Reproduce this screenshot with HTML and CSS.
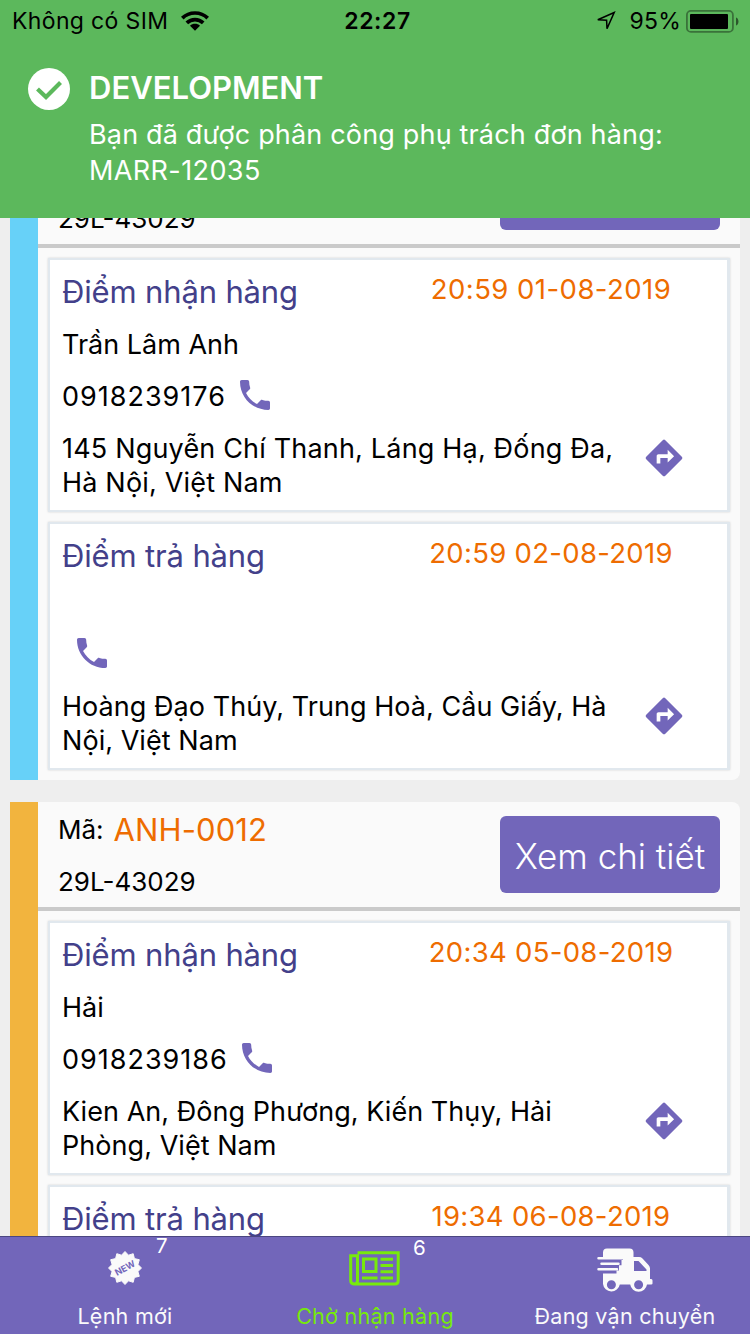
FILE: index.html
```html
<!DOCTYPE html>
<html lang="vi">
<head>
<meta charset="utf-8">
<title>Chờ nhận hàng</title>
<link rel="stylesheet" href="styles.css">
</head>
<body>
<svg class="defs" width="0" height="0">
  <symbol id="phone" viewBox="0 0 24 24"><path d="M6.620 10.790c1.440 2.830 3.760 5.140 6.590 6.590l2.200-2.200c.27-.27.67-.36 1.020-.24 1.120.37 2.330.57 3.570.57.55 0 1 .45 1 1V20c0 .55-.45 1-1 1C10.610 21 3 13.390 3 4c0-.55.45-1 1-1h3.500c.55 0 1 .45 1 1 0 1.250.2 2.450.57 3.570.11.35.03.74-.25 1.020l-2.200 2.200z"/></symbol>
  <symbol id="directions" viewBox="0 0 24 24"><path d="M21.710 11.290l-9-9a.996.996 0 0 0-1.410 0l-9 9a.996.996 0 0 0 0 1.410l9 9c.39.39 1.020.39 1.410 0l9-9a.996.996 0 0 0 0-1.410zM14 14.500V12h-4v3H8v-4c0-.55.45-1 1-1h5V7.500l3.500 3.500-3.500 3.500z"/></symbol>
</svg>
<div class="app">
  <header class="banner">
    <div class="status">
      <div class="status-left">
        <span class="carrier">Không có SIM</span>
        <svg width="28" height="20" viewBox="0 0 28 20"><g fill="none" stroke="#000" stroke-width="3.700"><path d="M1.300 7.100C8.200 .3 19.800 .3 26.700 7.100"/><path d="M5.800 11.900C10.400 7.400 17.600 7.400 22.200 11.900"/></g><path d="M9 14.800C11.800 12.200 16.200 12.200 19 14.800L14 19.800Z"/></svg>
      </div>
      <span class="clock">22:27</span>
      <div class="status-right">
        <svg class="locate" width="20" height="20" viewBox="0 0 20 20"><path d="M18.200 1.500L1.800 8.800L10.600 9.200L11 17.600Z" fill="none" stroke="#000" stroke-width="1.500"/></svg>
        <span class="percent">95%</span>
        <svg width="54" height="24" viewBox="0 0 54 24"><rect x="1.900" y="1.900" width="46" height="21" rx="4" fill="none" stroke="#3a723a" stroke-width="1.800"/><rect x="5" y="5" width="38" height="15" rx="1"/><path d="M51 8.500C54.300 9.500 54.300 15.500 51 16.500Z" fill="#2c562c"/></svg>
      </div>
    </div>
    <div class="notice">
      <svg class="check" width="42" height="42" viewBox="0 0 42 42"><circle cx="21" cy="21" r="21" fill="#fff"/><path d="M9.500 21L18 29L32.500 14.500" fill="none" stroke="#5cb85c" stroke-width="4.200"/></svg>
      <div class="notice-body">
        <div class="notice-title">DEVELOPMENT</div>
        <div class="notice-text">Bạn đã được phân công phụ trách đơn hàng:<br><span class="code">MARR-12035</span></div>
      </div>
    </div>
  </header>

  <main class="list">
    <article class="card card-blue">
      <div class="card-head">
        <div class="ids"><div class="order"></div><div class="plate">29L-43029</div></div>
        <div class="detail"></div>
      </div>
      <div class="stops">
        <section class="stop">
          <div class="row"><h2>Điểm nhận hàng</h2><time class="wide">20:59 01-08-2019</time></div>
          <div class="name">Trần Lâm Anh</div>
          <div class="phone"><span>0918239176</span><svg><use href="#phone"/></svg></div>
          <div class="address wide-text"><p>145 Nguyễn Chí Thanh, Láng Hạ, Đống Đa,<br>Hà Nội, Việt Nam</p><svg><use href="#directions"/></svg></div>
        </section>
        <section class="stop">
          <div class="row"><h2>Điểm trả hàng</h2><time>20:59 02-08-2019</time></div>
          <div class="name name-empty"></div>
          <div class="phone"><span></span><svg><use href="#phone"/></svg></div>
          <div class="address"><p>Hoàng Đạo Thúy, Trung Hoà, Cầu Giấy, Hà<br>Nội, Việt Nam</p><svg><use href="#directions"/></svg></div>
        </section>
      </div>
    </article>
    <article class="card card-amber">
      <div class="card-head">
        <div class="ids"><div class="order"><span>Mã:</span><b>ANH-0012</b></div><div class="plate">29L-43029</div></div>
        <button class="detail">Xem chi tiết</button>
      </div>
      <div class="stops">
        <section class="stop">
          <div class="row"><h2>Điểm nhận hàng</h2><time>20:34 05-08-2019</time></div>
          <div class="name">Hải</div>
          <div class="phone"><span>0918239186</span><svg><use href="#phone"/></svg></div>
          <div class="address"><p>Kien An, Đông Phương, Kiến Thụy, Hải<br>Phòng, Việt Nam</p><svg><use href="#directions"/></svg></div>
        </section>
        <section class="stop">
          <div class="row"><h2>Điểm trả hàng</h2><time>19:34 06-08-2019</time></div>
          <div class="name name-empty"></div>
        </section>
      </div>
    </article>
  </main>

  <nav class="tabs">
    <a class="tab"><svg width="36" height="36" viewBox="0 0 36 36"><path fill="#fafafa" stroke="#fafafa" stroke-width="1" stroke-linejoin="round" d="M18 1.500L21.500 5.200L26.200 3.700L27.400 8.600L32.300 9.700L30.900 14.500L34.500 18L30.900 21.500L32.300 26.300L27.400 27.400L26.200 32.300L21.500 30.800L18 34.500L14.500 30.800L9.800 32.300L8.600 27.400L3.700 26.300L5.100 21.500L1.500 18L5.100 14.500L3.700 9.700L8.600 8.600L9.800 3.700L14.500 5.200Z"/><text class="new" x="18" y="21.200" text-anchor="middle" transform="rotate(-28 18 18)">NEW</text></svg><span class="badge badge-new">7</span><span class="label">Lệnh mới</span></a>
    <a class="tab active"><svg width="52" height="36" viewBox="0 0 52 36"><g fill="none" stroke="#77ea0b" stroke-width="3"><path d="M8.500 2.700H49.200V30.800Q49.200 34 46 34H5.500Q1.700 34 1.700 30.500V5.800H8.500V30.500Q8.500 34 5.500 34"/><rect x="14.500" y="9" width="12.500" height="12.500"/><path d="M13 28H28.500M31.500 9.300H44M31.500 15.500H44M31.500 21.700H44M31.500 28H44"/></g></svg><span class="badge badge-wait">6</span><span class="label">Chờ nhận hàng</span></a>
    <a class="tab"><svg class="truck" width="56" height="45" viewBox="0 0 56 45"><path fill="#fafafa" fill-rule="evenodd" d="M10 .5H32.500Q36.500 .5 36.500 4.500V9H42Q44 9 45.500 10.400L51.500 17Q53 18.500 53 20.500V31H54.200Q55.500 31 55.500 32.500V35.500Q55.500 36.500 54.200 36.500H50A8.500 8.500 0 0 1 33.200 36.500H22.800A8.500 8.500 0 0 1 6 36V25.500H19.500V22.600H22V17.200H24.500V12H26V9.200H6V4.500Q6 .5 10 .5ZM37 13V23H49.500V21.500L41.500 13ZM14.400 32.200A4.500 4.500 0 1 0 14.400 41.200A4.500 4.500 0 1 0 14.400 32.200ZM41.600 32.200A4.500 4.500 0 1 0 41.600 41.200A4.500 4.500 0 1 0 41.600 32.200Z"/><rect x="6" y="8" width="20" height="2.500" fill="#fafafa"/><g stroke="#fafafa" stroke-width="2.500" stroke-linecap="round"><path d="M1.500 10.200H26M4.500 15.800H21.500M1.500 21.200H20"/></g></svg><span class="label">Đang vận chuyển</span></a>
  </nav>
</div>
</body>
</html>
```
FILE: styles.css
```css
* { box-sizing: border-box; }
body { margin: 0; background: #eee; font-family: Inter, "Noto Sans", sans-serif; color: #000; }
.defs { display: block; position: absolute; }
.app { width: 750px; height: 1334px; display: flex; flex-direction: column; overflow: hidden; }
.banner { height: 218px; flex: none; background: #5cb85c; }
.status { height: 40px; display: grid; grid-template-columns: 1fr auto 1fr; align-items: center; font-size: 23px; line-height: 40px; padding: 1px 11px 0 12px; }
.status-left, .status-right { display: flex; align-items: center; }
.status-left { gap: 13px; }
.status-left svg, .status-right svg { margin-top: -1px; }
.status-right { justify-content: flex-end; }
.locate { margin-right: 14px; }
.percent { margin-right: 4px; letter-spacing: .2px; }
.carrier { letter-spacing: .35px; }
.clock { font-weight: 600; letter-spacing: .6px; margin-left: 4px; }
.notice { display: flex; padding: 28px 28px 0; gap: 19px; color: #fff; }
.check { flex: none; }
.notice-title { font-size: 31px; font-weight: 600; line-height: 40px; }
.notice-text { font-size: 27px; line-height: 36px; margin-top: 9px; letter-spacing: .17px; white-space: nowrap; }
.code { letter-spacing: .4px; }

.list { flex: 1; min-height: 0; overflow: hidden; padding: 0 10px; }
.card { background: #fafafa; border-left: 28px solid; border-radius: 0 8px 8px 0; margin-bottom: 22px; }
.card-blue { border-left-color: #67d1f8; margin-top: -79px; }
.card-amber { border-left-color: #f2b43e; }
.card-head { height: 109px; display: flex; justify-content: space-between; align-items: flex-start; padding: 2px 20px 0; border-bottom: 4px solid #cacaca; }
.order, .plate { height: 52px; line-height: 52px; font-size: 26px; white-space: nowrap; }
.order { display: flex; gap: 10px; }
.order b { font-size: 31px; font-weight: 400; letter-spacing: .1px; color: #ee6c00; }
.detail { width: 220px; height: 77px; margin: 12px 0 0; padding: 3px 0 0; border: 0; border-radius: 6px; background: #7266ba; color: #fff; font: 300 35px Inter, "Noto Sans", sans-serif; white-space: nowrap; }
.stops { display: flex; flex-direction: column; gap: 10px; padding: 10px; }
.stop { background: #fff; border: 2px solid #e1e8ee; border-right-width: 3px; padding: 6px 12px 10px; box-shadow: 0 0 2px rgba(0, 0, 0, .16); }
.row { display: flex; justify-content: space-between; height: 52px; }
.row h2 { margin: 0; font-size: 31px; font-weight: 400; line-height: 52px; letter-spacing: -.15px; color: #43408a; white-space: nowrap; }
.row time { width: 280px; margin-right: 24px; text-align: center; font-size: 27.500px; line-height: 47px; letter-spacing: .3px; color: #ee6c00; white-space: nowrap; }
.row .wide { letter-spacing: .45px; }
.name { height: 52px; line-height: 54px; font-size: 27px; }
.name-empty { height: 46px; }
.phone { height: 52px; display: flex; align-items: center; gap: 9px; font-size: 27px; letter-spacing: 1px; }
.phone span:empty { margin-right: 1px; }
.phone svg { width: 40px; height: 40px; margin-bottom: 2px; fill: #7266ba; }
.address { display: flex; justify-content: space-between; padding: 10px 29px 0 0; letter-spacing: .05px; }
.wide-text { letter-spacing: .18px; }
.address p { margin: 0; font-size: 27px; line-height: 34px; white-space: nowrap; }
.address svg { width: 44px; height: 44px; margin-top: 4px; fill: #7266ba; }

.tabs { height: 98px; flex: none; display: grid; grid-template-columns: repeat(3, 1fr); background: #7266ba; border-top: 1px solid #4b4680; }
.tab { position: relative; display: flex; flex-direction: column; align-items: center; justify-content: space-between; color: #fafafa; font-size: 21.500px; }
.tab > svg { margin: auto 0; }
.tab > .truck { margin: 11px 0 0; }
.label { line-height: 36px; letter-spacing: .27px; white-space: nowrap; }
.active { color: #77ea0b; }
.badge { position: absolute; top: -4px; color: #fff; font-size: 20.500px; line-height: 26px; }
.badge-new { left: 156px; }
.badge-wait { left: 163px; top: -2px; }
.new { font-size: 9px; font-weight: 700; fill: #7266ba; }
```
